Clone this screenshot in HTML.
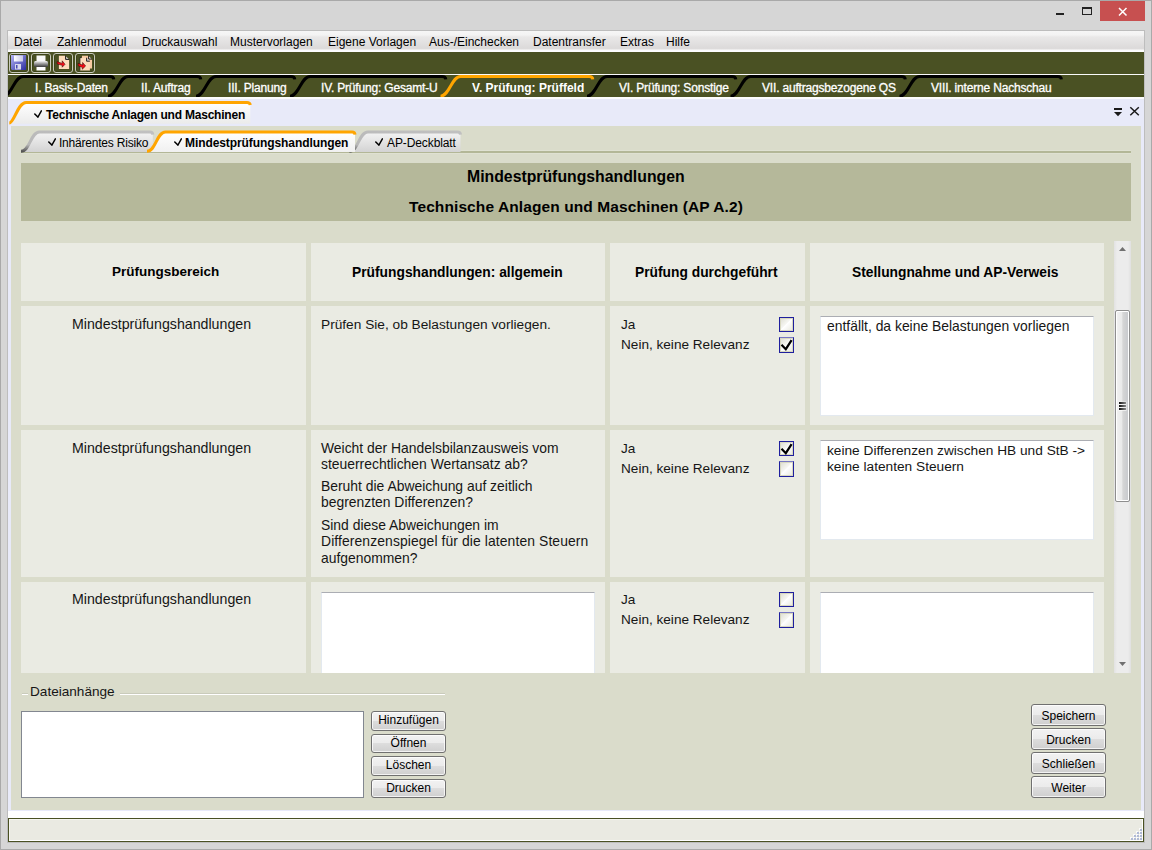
<!DOCTYPE html>
<html><head><meta charset="utf-8">
<style>
*{margin:0;padding:0;box-sizing:border-box}
html,body{width:1152px;height:850px;overflow:hidden}
body{position:relative;background:#d6d6d6;font-family:"Liberation Sans",sans-serif;color:#000}
.a{position:absolute}
.t{position:absolute;white-space:nowrap;line-height:1}
.cell{position:absolute;background:#eaebe3}
.btn{position:absolute;border:1px solid #707070;border-radius:3px;background:linear-gradient(#f2f2f2 0,#ebebeb 50%,#dddddd 50%,#cfcfcf 100%);box-shadow:inset 0 0 0 1px rgba(255,255,255,.75)}
.cb{position:absolute;width:15px;height:15px;border:1px solid #1f1f9e;background:linear-gradient(135deg,#dcdcd0 0,#f6f6f2 45%,#ffffff 50%,#e6e6dc 100%);box-shadow:inset 0 0 0 1px #d8d8c0}
.tb{position:absolute;background:#fff;border:1px solid #e3e9ef;border-top-color:#abadb3}
</style></head><body>
<div class="a" style="left:0;top:0;width:1152px;height:850px;border:1px solid #a9a9a9"></div>
<div class="a" style="left:1100px;top:1px;width:45px;height:20px;background:#c75050"></div>
<svg class="a" style="left:1100px;top:1px" width="45" height="20"><path d="M19 7 L26.5 14.5 M26.5 7 L19 14.5" stroke="#fff" stroke-width="1.5"/></svg>
<div class="a" style="left:1082px;top:7px;width:10px;height:8px;border:1px solid #222;border-top-width:2px"></div>
<div class="a" style="left:1056px;top:13px;width:8px;height:2px;background:#222"></div>
<div class="a" style="left:7px;top:30px;width:1138px;height:813px;border:1px solid #bdbdbd;background:#fff"></div>
<div class="a" style="left:8px;top:31px;width:1136px;height:21px;background:linear-gradient(#f6f6f6 0,#f3f3f3 4px,#e9e8e8 6px,#dcdada 17px,#dedcdc 18px,#fbfbfb 19px,#fff 21px)"></div>
<div class="t" style="left:14px;top:36px;font-size:12px;font-weight:400;color:#000;">Datei</div>
<div class="t" style="left:57px;top:36px;font-size:12px;font-weight:400;color:#000;">Zahlenmodul</div>
<div class="t" style="left:142px;top:36px;font-size:12px;font-weight:400;color:#000;">Druckauswahl</div>
<div class="t" style="left:230px;top:36px;font-size:12px;font-weight:400;color:#000;">Mustervorlagen</div>
<div class="t" style="left:328px;top:36px;font-size:12px;font-weight:400;color:#000;">Eigene Vorlagen</div>
<div class="t" style="left:429px;top:36px;font-size:12px;font-weight:400;color:#000;">Aus-/Einchecken</div>
<div class="t" style="left:533px;top:36px;font-size:12px;font-weight:400;color:#000;">Datentransfer</div>
<div class="t" style="left:620px;top:36px;font-size:12px;font-weight:400;color:#000;">Extras</div>
<div class="t" style="left:666px;top:36px;font-size:12px;font-weight:400;color:#000;">Hilfe</div>
<div class="a" style="left:8px;top:52px;width:1136px;height:22px;background:#4a5123"></div>
<div class="a" style="left:8px;top:74px;width:1136px;height:1px;background:#fafafa"></div>
<div class="a" style="left:9px;top:53px;width:20px;height:20px;border:1px solid #c9cbbd;border-radius:3px;box-shadow:inset 0 0 0 1px #3d4419"></div>
<div class="a" style="left:31px;top:53px;width:20px;height:20px;border:1px solid #c9cbbd;border-radius:3px;box-shadow:inset 0 0 0 1px #3d4419"></div>
<div class="a" style="left:53px;top:53px;width:20px;height:20px;border:1px solid #c9cbbd;border-radius:3px;box-shadow:inset 0 0 0 1px #3d4419"></div>
<div class="a" style="left:75px;top:53px;width:20px;height:20px;border:1px solid #c9cbbd;border-radius:3px;box-shadow:inset 0 0 0 1px #3d4419"></div>
<svg class="a" style="left:11px;top:55px" width="16" height="16" viewBox="0 0 16 16">
<defs><linearGradient id="fl" x1="0" y1="0" x2="1" y2="1"><stop offset="0" stop-color="#b4b4f4"/><stop offset="1" stop-color="#2c2ca0"/></linearGradient>
<linearGradient id="fw" x1="0" y1="0" x2="1" y2="0"><stop offset="0" stop-color="#ffffff"/><stop offset="1" stop-color="#c8c8e8"/></linearGradient></defs>
<path d="M0 0 H15 V15 H1 L0 14 Z" fill="url(#fl)"/>
<rect x="3" y="0.5" width="9" height="6" fill="url(#fw)"/>
<rect x="4" y="9" width="6" height="5.5" fill="#d8d8ec"/>
<rect x="5" y="10" width="1.5" height="3.5" fill="#4848b0"/>
</svg>
<svg class="a" style="left:33px;top:55px" width="16" height="16" viewBox="0 0 16 16">
<defs><linearGradient id="pr" x1="0" y1="0" x2="0" y2="1"><stop offset="0" stop-color="#f4f4f4"/><stop offset="0.45" stop-color="#9a9a9a"/><stop offset="1" stop-color="#3a3a3a"/></linearGradient></defs>
<rect x="3.5" y="0.5" width="9" height="6" fill="#f8f8f8"/>
<rect x="1" y="6" width="14" height="6" rx="1.5" fill="url(#pr)"/>
<rect x="3.5" y="12" width="9" height="3.5" fill="#ffffff"/>
</svg>
<svg class="a" style="left:54px;top:53px" width="20" height="20" viewBox="0 0 20 20">
<path d="M4.9 2.8 H11.3 L15.1 6.7 V16 H4.9 Z" fill="#fddcbc"/>
<path d="M11.6 3.2 L14.8 6.3 H11.6 Z" fill="#d4d4d8"/>
<path d="M11.6 2.6 V6.4 H15.2" fill="none" stroke="#111" stroke-width="0.95"/>
<path d="M3 8.6 L8.2 10.4 L8.2 7.8 L11 11.3 L8.2 14.2 L8.2 12.3 L3.2 11 Z" fill="#ff0a14" stroke="#2a0a0a" stroke-width="0.55" stroke-linejoin="round"/>
</svg>
<svg class="a" style="left:76px;top:53px" width="20" height="20" viewBox="0 0 20 20">
<path d="M6 2.8 H12.35 L16 6.4 V15.5 H6 Z" fill="#f7c9a2"/>
<path d="M12.6 3.2 L15.6 6.1 H12.6 Z" fill="#d4d4d8"/>
<path d="M12.6 2.6 V6.1 H16" fill="none" stroke="#111" stroke-width="0.9"/>
<path d="M3.8 4.7 H10.35 L13.9 8.4 V17.5 H3.8 Z" fill="#fcdcbc"/>
<path d="M3.9 17.5 V4.6 H5.5" fill="none" stroke="#161616" stroke-width="0.8"/>
<path d="M10.6 5.1 L13.6 8.1 H10.6 Z" fill="#c8ccd4"/>
<path d="M10.6 4.7 V8.2 H13.9" fill="none" stroke="#111" stroke-width="0.9"/>
<path d="M2 10.3 L6.6 12.1 L6.6 9.5 L9.6 13 L6.3 16.2 L6.3 14.3 L2.3 12.9 Z" fill="#ff0a14" stroke="#2a0a0a" stroke-width="0.55" stroke-linejoin="round"/>
</svg>
<div class="a" style="left:8px;top:75px;width:1136px;height:22px;background:#4a5123"></div>
<div class="a" style="left:8px;top:97px;width:1136px;height:2px;background:#fcfcfc"></div>
<svg class="a" style="left:8px;top:75px" width="1136" height="22" viewBox="8 75 1136 22"><path d="M3 96.2 C12 96.2 14 76.5 23 76.5 L110 76.5 Q113.5 76.5 113.8 79.3" fill="none" stroke="#000" stroke-width="3"/><path d="M108 96.2 C117 96.2 119 76.5 128 76.5 L197 76.5 Q200.5 76.5 200.8 79.3" fill="none" stroke="#000" stroke-width="3"/><path d="M196 96.2 C205 96.2 207 76.5 216 76.5 L291 76.5 Q294.5 76.5 294.8 79.3" fill="none" stroke="#000" stroke-width="3"/><path d="M290 96.2 C299 96.2 301 76.5 310 76.5 L442 76.5 Q445.5 76.5 445.8 79.3" fill="none" stroke="#000" stroke-width="3"/><path d="M587 96.2 C596 96.2 598 76.5 607 76.5 L732 76.5 Q735.5 76.5 735.8 79.3" fill="none" stroke="#000" stroke-width="3"/><path d="M730.5 96.2 C739.5 96.2 741.5 76.5 750.5 76.5 L901.5 76.5 Q905.0 76.5 905.3 79.3" fill="none" stroke="#000" stroke-width="3"/><path d="M899.5 96.2 C908.5 96.2 910.5 76.5 919.5 76.5 L1057.6 76.5 Q1061.1 76.5 1061.3999999999999 79.3" fill="none" stroke="#000" stroke-width="3"/><path d="M440.5 96.2 C449.5 96.2 451.5 76.5 460.5 76.5 L589 76.5 Q592.5 76.5 592.8 79.3" fill="none" stroke="#ffa500" stroke-width="3"/></svg>
<div class="t" style="left:35px;top:82px;font-size:12px;font-weight:400;color:#fff;letter-spacing:-0.18px;-webkit-text-stroke:0.3px #fff">I. Basis-Daten</div>
<div class="t" style="left:141px;top:82px;font-size:12px;font-weight:400;color:#fff;letter-spacing:-0.18px;-webkit-text-stroke:0.3px #fff">II. Auftrag</div>
<div class="t" style="left:228px;top:82px;font-size:12px;font-weight:400;color:#fff;letter-spacing:-0.18px;-webkit-text-stroke:0.3px #fff">III. Planung</div>
<div class="t" style="left:321px;top:82px;font-size:12px;font-weight:400;color:#fff;letter-spacing:-0.18px;-webkit-text-stroke:0.3px #fff">IV. Prüfung: Gesamt-U</div>
<div class="t" style="left:472px;top:82px;font-size:12px;font-weight:700;color:#fff;">V. Prüfung: Prüffeld</div>
<div class="t" style="left:619px;top:82px;font-size:12px;font-weight:400;color:#fff;letter-spacing:-0.18px;-webkit-text-stroke:0.3px #fff">VI. Prüfung: Sonstige</div>
<div class="t" style="left:762px;top:82px;font-size:12px;font-weight:400;color:#fff;letter-spacing:-0.18px;-webkit-text-stroke:0.3px #fff">VII. auftragsbezogene QS</div>
<div class="t" style="left:931px;top:82px;font-size:12px;font-weight:400;color:#fff;letter-spacing:-0.18px;-webkit-text-stroke:0.3px #fff">VIII. interne Nachschau</div>
<div class="a" style="left:8px;top:99px;width:1136px;height:712px;background:#e8eaf9"></div>
<div class="a" style="left:8px;top:813px;width:1136px;height:5px;background:#fff"></div>
<svg class="a" style="left:8px;top:99px" width="260" height="27" viewBox="8 99 260 27">
<defs><linearGradient id="dt" x1="0" y1="0" x2="0" y2="1"><stop offset="0" stop-color="#ffffff"/><stop offset="1" stop-color="#ebebeb"/></linearGradient></defs>
<path d="M9.3 123.8 C14 123.8 18 102.5 26 102.5 L247 102.5 Q250 102.5 250.3 105 L250.3 123.8 Z" fill="url(#dt)"/>
<path d="M9.3 123 C14 123 18 102.5 26 102.5 L247 102.5 Q249.8 102.5 250.3 105" fill="none" stroke="#ffa500" stroke-width="3"/>
</svg>
<svg class="a" style="left:34px;top:110px" width="8" height="8" viewBox="0 0 8 8"><path d="M0.3 3.6 L3.9 7.1 L7.7 0.3" fill="none" stroke="#000" stroke-width="1.45"/></svg>
<div class="t" style="left:46px;top:109px;font-size:12px;font-weight:700;color:#000;letter-spacing:-0.22px">Technische Anlagen und Maschinen</div>
<svg class="a" style="left:1112px;top:105px" width="30" height="14" viewBox="0 0 30 14">
<rect x="2" y="3" width="8" height="2" fill="#1a1a1a"/>
<path d="M2 7 H10 L6 11.2 Z" fill="#1a1a1a"/>
<path d="M18.3 2.3 L26.8 10.3 M26.8 2.3 L18.3 10.3" stroke="#1a1a1a" stroke-width="1.5"/>
</svg>
<div class="a" style="left:11px;top:126px;width:1130px;height:684px;background:#dadccb"></div>
<div class="a" style="left:21px;top:150px;width:1110px;height:4px;background:linear-gradient(#dfe1d2 0,#dfe1d2 25%,#b3b797 25%,#b3b797 75%,#dfe1d2 75%)"></div>
<svg class="a" style="left:11px;top:126px" width="460" height="28" viewBox="11 126 460 28"><defs><linearGradient id="sg" x1="0" y1="0" x2="0" y2="1"><stop offset="0" stop-color="#f4f4f4"/><stop offset="1" stop-color="#d3d3d3"/></linearGradient><linearGradient id="sw" x1="0" y1="0" x2="0" y2="1"><stop offset="0" stop-color="#ffffff"/><stop offset="1" stop-color="#f0f0f0"/></linearGradient><linearGradient id="sgs" x1="0" y1="1" x2="1" y2="0"><stop offset="0" stop-color="#555"/><stop offset="0.2" stop-color="#b8b8b8"/><stop offset="1" stop-color="#c0c0c0"/></linearGradient></defs><path d="M349.4 152.0 C358.4 152.0 358.9 132 367.9 132 L457.5 132 Q460.5 132 460.5 135 L460.5 152.0 Z" fill="url(#sg)"/><path d="M349.4 151.2 C358.4 151.2 358.9 132 367.9 132 L457.5 132 Q460.3 132 460.5 134.6" fill="none" stroke="url(#sgs)" stroke-width="3"/><path d="M21 152.0 C30 152.0 30.5 132 39.5 132 L149.8 132 Q152.8 132 152.8 135 L152.8 152.0 Z" fill="url(#sg)"/><path d="M21 151.2 C30 151.2 30.5 132 39.5 132 L149.8 132 Q152.60000000000002 132 152.8 134.6" fill="none" stroke="url(#sgs)" stroke-width="3"/><path d="M147 152.0 C156 152.0 156.5 132 165.5 132 L352 132 Q355 132 355 135 L355 152.0 Z" fill="url(#sw)"/><path d="M147 151.2 C156 151.2 156.5 132 165.5 132 L352 132 Q354.8 132 355 134.6" fill="none" stroke="#ffa500" stroke-width="3"/></svg>
<svg class="a" style="left:48px;top:138px" width="8" height="8" viewBox="0 0 8 8"><path d="M0.3 3.6 L3.9 7.1 L7.7 0.3" fill="none" stroke="#000" stroke-width="1.45"/></svg>
<div class="t" style="left:59px;top:137px;font-size:12px;font-weight:400;color:#000;letter-spacing:-0.21px">Inhärentes Risiko</div>
<svg class="a" style="left:174px;top:138px" width="8" height="8" viewBox="0 0 8 8"><path d="M0.3 3.6 L3.9 7.1 L7.7 0.3" fill="none" stroke="#000" stroke-width="1.45"/></svg>
<div class="t" style="left:185px;top:137px;font-size:12px;font-weight:700;color:#000;letter-spacing:-0.08px">Mindestprüfungshandlungen</div>
<svg class="a" style="left:375px;top:138px" width="8" height="8" viewBox="0 0 8 8"><path d="M0.3 3.6 L3.9 7.1 L7.7 0.3" fill="none" stroke="#000" stroke-width="1.45"/></svg>
<div class="t" style="left:387px;top:137px;font-size:12px;font-weight:400;color:#000;letter-spacing:-0.1px">AP-Deckblatt</div>
<div class="a" style="left:21px;top:163px;width:1110px;height:58px;background:#b5b89a"></div>
<div class="t" style="left:467px;top:169px;font-size:15.8px;font-weight:700;color:#000;">Mindestprüfungshandlungen</div>
<div class="t" style="left:409px;top:199px;font-size:15.5px;font-weight:700;color:#000;letter-spacing:0.1px">Technische Anlagen und Maschinen (AP A.2)</div>
<div class="a" style="left:11px;top:241px;width:1100px;height:432px;overflow:hidden">
<div class="cell" style="left:10px;top:2px;width:285px;height:58px"></div>
<div class="cell" style="left:300px;top:2px;width:294px;height:58px"></div>
<div class="cell" style="left:599px;top:2px;width:195px;height:58px"></div>
<div class="cell" style="left:799px;top:2px;width:294px;height:58px"></div>
<div class="cell" style="left:10px;top:65px;width:285px;height:119px"></div>
<div class="cell" style="left:300px;top:65px;width:294px;height:119px"></div>
<div class="cell" style="left:599px;top:65px;width:195px;height:119px"></div>
<div class="cell" style="left:799px;top:65px;width:294px;height:119px"></div>
<div class="cell" style="left:10px;top:189px;width:285px;height:147px"></div>
<div class="cell" style="left:300px;top:189px;width:294px;height:147px"></div>
<div class="cell" style="left:599px;top:189px;width:195px;height:147px"></div>
<div class="cell" style="left:799px;top:189px;width:294px;height:147px"></div>
<div class="cell" style="left:10px;top:341px;width:285px;height:148px"></div>
<div class="cell" style="left:300px;top:341px;width:294px;height:148px"></div>
<div class="cell" style="left:599px;top:341px;width:195px;height:148px"></div>
<div class="cell" style="left:799px;top:341px;width:294px;height:148px"></div>
<div class="t" style="left:101px;top:24px;font-size:13.5px;font-weight:700;color:#000;">Prüfungsbereich</div>
<div class="t" style="left:341px;top:25px;font-size:13.8px;font-weight:700;color:#000;">Prüfungshandlungen: allgemein</div>
<div class="t" style="left:624px;top:25px;font-size:13.8px;font-weight:700;color:#000;">Prüfung durchgeführt</div>
<div class="t" style="left:841px;top:25px;font-size:13.8px;font-weight:700;color:#000;">Stellungnahme und AP-Verweis</div>
<div class="t" style="left:61px;top:76px;font-size:14.2px;font-weight:400;color:#161616;">Mindestprüfungshandlungen</div>
<div class="t" style="left:61px;top:200px;font-size:14.2px;font-weight:400;color:#161616;">Mindestprüfungshandlungen</div>
<div class="t" style="left:61px;top:351px;font-size:14.2px;font-weight:400;color:#161616;">Mindestprüfungshandlungen</div>
<div class="t" style="left:310px;top:77px;font-size:13.7px;font-weight:400;color:#161616;">Prüfen Sie, ob Belastungen vorliegen.</div>
<div class="t" style="left:310px;top:201px;font-size:13.9px;font-weight:400;color:#161616;letter-spacing:0px">Weicht der Handelsbilanzausweis vom</div>
<div class="t" style="left:310px;top:217px;font-size:13.9px;font-weight:400;color:#161616;letter-spacing:0px">steuerrechtlichen Wertansatz ab?</div>
<div class="t" style="left:310px;top:239px;font-size:13.9px;font-weight:400;color:#161616;letter-spacing:0px">Beruht die Abweichung auf zeitlich</div>
<div class="t" style="left:310px;top:255px;font-size:13.9px;font-weight:400;color:#161616;letter-spacing:0px">begrenzten Differenzen?</div>
<div class="t" style="left:310px;top:278px;font-size:13.9px;font-weight:400;color:#161616;letter-spacing:0px">Sind diese Abweichungen im</div>
<div class="t" style="left:310px;top:294px;font-size:13.9px;font-weight:400;color:#161616;letter-spacing:0.1px">Differenzenspiegel für die latenten Steuern</div>
<div class="t" style="left:310px;top:311px;font-size:13.9px;font-weight:400;color:#161616;letter-spacing:0px">aufgenommen?</div>
<div class="tb" style="left:310px;top:351px;width:274px;height:100px"></div>
<div class="t" style="left:610px;top:77px;font-size:13.6px;font-weight:400;color:#161616;">Ja</div>
<div class="t" style="left:610px;top:97px;font-size:13.6px;font-weight:400;color:#161616;">Nein, keine Relevanz</div>
<div class="cb" style="left:768px;top:76px;"></div>
<div class="cb" style="left:768px;top:96px;height:16px;border-top-color:#7878c4"></div>
<svg class="a" style="left:768px;top:96px" width="15" height="15" viewBox="0 0 15 15"><path d="M2.5 7.8 L6.8 12.2 L12.6 3.2" fill="none" stroke="#000" stroke-width="2.2"/></svg>
<div class="t" style="left:610px;top:201px;font-size:13.6px;font-weight:400;color:#161616;">Ja</div>
<div class="t" style="left:610px;top:221px;font-size:13.6px;font-weight:400;color:#161616;">Nein, keine Relevanz</div>
<div class="cb" style="left:768px;top:200px;"></div>
<svg class="a" style="left:768px;top:200px" width="15" height="15" viewBox="0 0 15 15"><path d="M2.5 7.8 L6.8 12.2 L12.6 3.2" fill="none" stroke="#000" stroke-width="2.2"/></svg>
<div class="cb" style="left:768px;top:220px;height:16px;border-top-color:#7878c4"></div>
<div class="t" style="left:610px;top:352px;font-size:13.6px;font-weight:400;color:#161616;">Ja</div>
<div class="t" style="left:610px;top:372px;font-size:13.6px;font-weight:400;color:#161616;">Nein, keine Relevanz</div>
<div class="cb" style="left:768px;top:351px;"></div>
<div class="cb" style="left:768px;top:371px;height:16px;border-top-color:#7878c4"></div>
<div class="tb" style="left:809px;top:75px;width:274px;height:100px"></div>
<div class="t" style="left:816px;top:79px;font-size:13.9px;font-weight:400;color:#161616;">entfällt, da keine Belastungen vorliegen</div>
<div class="tb" style="left:809px;top:199px;width:274px;height:100px"></div>
<div class="t" style="left:816px;top:203px;font-size:13.7px;font-weight:400;color:#161616;">keine Differenzen zwischen HB und StB -&gt;</div>
<div class="t" style="left:816px;top:219px;font-size:13.7px;font-weight:400;color:#161616;">keine latenten Steuern</div>
<div class="tb" style="left:809px;top:351px;width:274px;height:100px"></div>
</div>
<div class="a" style="left:1114px;top:241px;width:17px;height:432px;background:linear-gradient(90deg,#e2e2e2 0,#ececec 3px,#ececec 14px,#e0e0e0 17px)"></div>
<svg class="a" style="left:1114px;top:241px" width="17" height="432"><path d="M5 10 L8.5 6 L12 10 Z" fill="#707070"/><path d="M5 421 L8.5 425 L12 421 Z" fill="#707070"/></svg>
<div class="a" style="left:1115px;top:310px;width:15px;height:192px;border:1px solid #8e8e8e;border-radius:2px;box-shadow:inset 0 0 0 1px #fff;background:linear-gradient(90deg,#f2f2f2 0,#e9e9e9 46%,#d6d6d6 52%,#c6c8cc 100%)"></div>
<svg class="a" style="left:1118px;top:401px" width="10" height="11"><defs><linearGradient id="gr" x1="0" x2="1"><stop offset="0" stop-color="#111"/><stop offset="1" stop-color="#8a8a8a"/></linearGradient></defs><rect x="0.5" y="0.5" width="8" height="9.5" fill="#fff" opacity="0.6"/><rect x="1" y="1" width="7" height="2" fill="url(#gr)"/><rect x="1" y="4" width="7" height="2" fill="url(#gr)"/><rect x="1" y="7" width="7" height="2" fill="url(#gr)"/></svg>
<div class="a" style="left:22px;top:693px;width:6px;height:2px;background:linear-gradient(#c9cbbb 50%,#fff 50%)"></div>
<div class="a" style="left:120px;top:693px;width:325px;height:2px;background:linear-gradient(#c9cbbb 50%,#fff 50%)"></div>
<div class="t" style="left:30px;top:685px;font-size:13.6px;font-weight:400;color:#161616;">Dateianhänge</div>
<div class="a" style="left:21px;top:711px;width:343px;height:87px;background:#fff;border:1px solid #828790"></div>
<div class="btn" style="left:371px;top:711px;width:75px;height:19.5px"></div>
<div class="t" style="left:371px;top:714px;width:75px;text-align:center;font-size:12px;color:#000">Hinzufügen</div>
<div class="btn" style="left:371px;top:733.5px;width:75px;height:19.5px"></div>
<div class="t" style="left:371px;top:736.5px;width:75px;text-align:center;font-size:12px;color:#000">Öffnen</div>
<div class="btn" style="left:371px;top:756px;width:75px;height:19.5px"></div>
<div class="t" style="left:371px;top:759px;width:75px;text-align:center;font-size:12px;color:#000">Löschen</div>
<div class="btn" style="left:371px;top:778.5px;width:75px;height:19.5px"></div>
<div class="t" style="left:371px;top:781.5px;width:75px;text-align:center;font-size:12px;color:#000">Drucken</div>
<div class="btn" style="left:1031px;top:704px;width:75px;height:21.5px"></div>
<div class="t" style="left:1031px;top:710px;width:75px;text-align:center;font-size:12px;color:#000">Speichern</div>
<div class="btn" style="left:1031px;top:728px;width:75px;height:21.5px"></div>
<div class="t" style="left:1031px;top:734px;width:75px;text-align:center;font-size:12px;color:#000">Drucken</div>
<div class="btn" style="left:1031px;top:752px;width:75px;height:21.5px"></div>
<div class="t" style="left:1031px;top:758px;width:75px;text-align:center;font-size:12px;color:#000">Schließen</div>
<div class="btn" style="left:1031px;top:776px;width:75px;height:21.5px"></div>
<div class="t" style="left:1031px;top:782px;width:75px;text-align:center;font-size:12px;color:#000">Weiter</div>
<div class="a" style="left:8px;top:818px;width:1136px;height:24px;border:1px solid #4a5123;background:#eaeae2;box-shadow:inset -1px -1px 0 #fff, inset 1px 1px 0 #f6f6f0"></div>
<div class="a" style="left:1140px;top:829px;width:2px;height:2px;background:#b0bad6;box-shadow:-1px -1px 0 #fbfbfb"></div><div class="a" style="left:1140px;top:832px;width:2px;height:2px;background:#b0bad6;box-shadow:-1px -1px 0 #fbfbfb"></div><div class="a" style="left:1137px;top:832px;width:2px;height:2px;background:#b0bad6;box-shadow:-1px -1px 0 #fbfbfb"></div><div class="a" style="left:1140px;top:835px;width:2px;height:2px;background:#b0bad6;box-shadow:-1px -1px 0 #fbfbfb"></div><div class="a" style="left:1137px;top:835px;width:2px;height:2px;background:#b0bad6;box-shadow:-1px -1px 0 #fbfbfb"></div><div class="a" style="left:1134px;top:835px;width:2px;height:2px;background:#b0bad6;box-shadow:-1px -1px 0 #fbfbfb"></div><div class="a" style="left:1140px;top:838px;width:2px;height:2px;background:#b0bad6;box-shadow:-1px -1px 0 #fbfbfb"></div><div class="a" style="left:1137px;top:838px;width:2px;height:2px;background:#b0bad6;box-shadow:-1px -1px 0 #fbfbfb"></div><div class="a" style="left:1134px;top:838px;width:2px;height:2px;background:#b0bad6;box-shadow:-1px -1px 0 #fbfbfb"></div><div class="a" style="left:1131px;top:838px;width:2px;height:2px;background:#b0bad6;box-shadow:-1px -1px 0 #fbfbfb"></div>
</body></html>
